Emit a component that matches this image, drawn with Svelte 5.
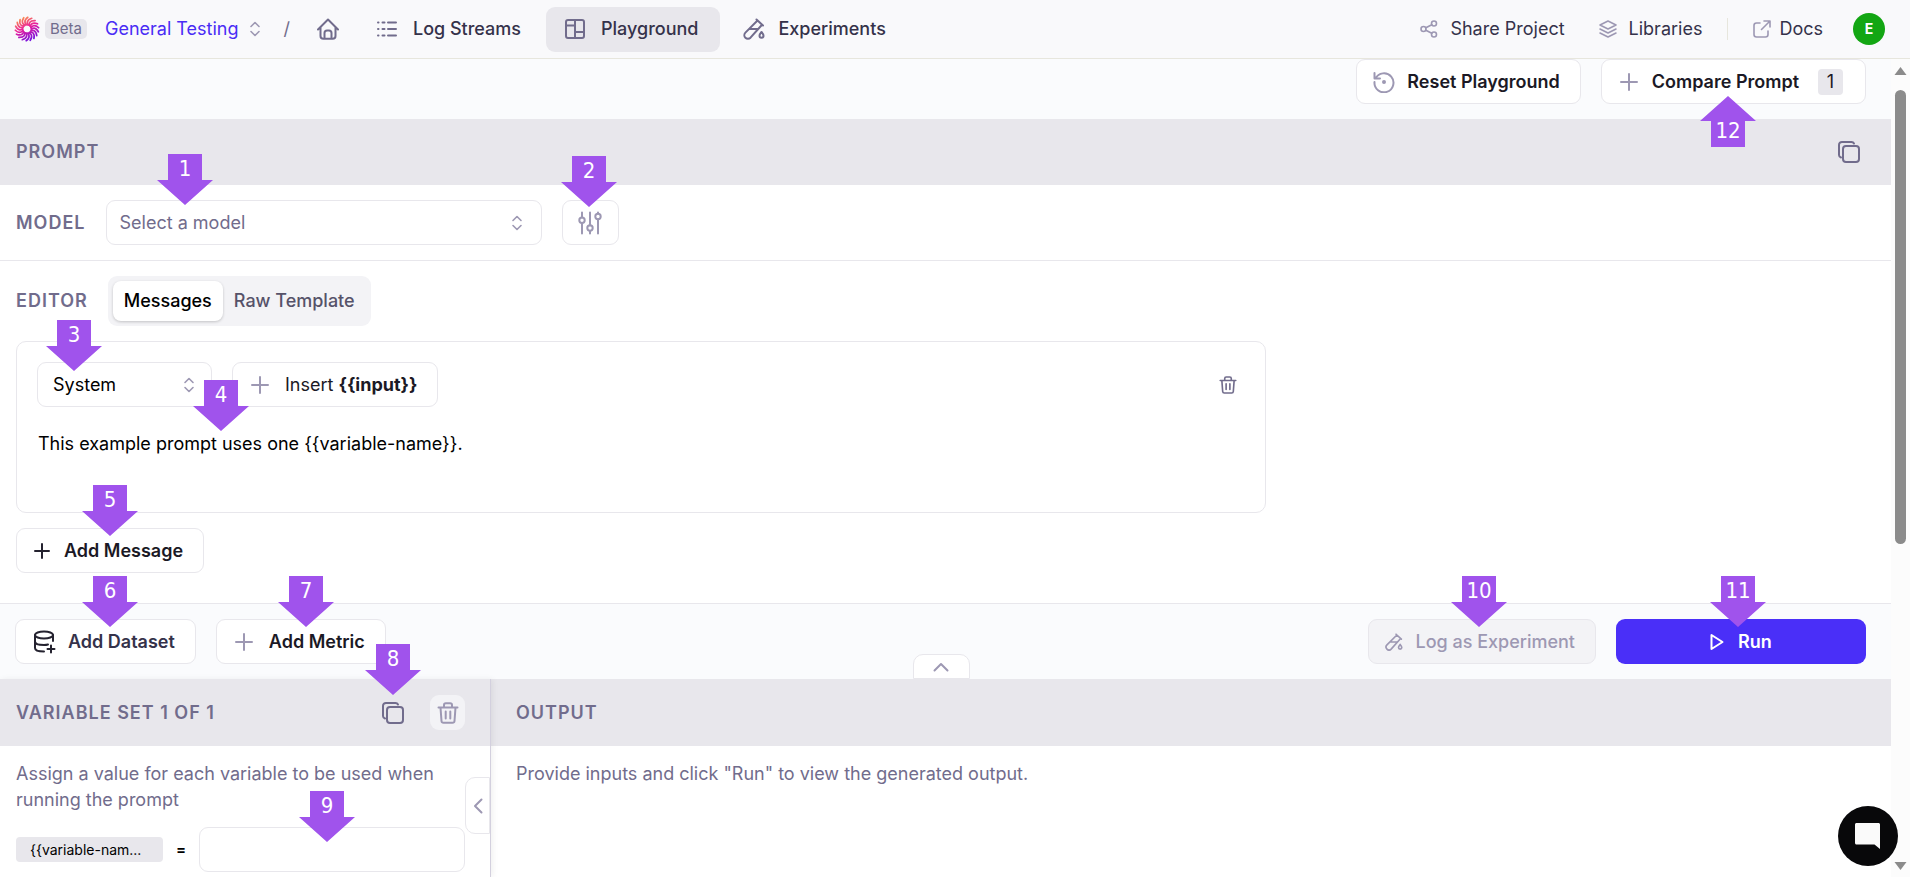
<script>
  let model = $state('');
  let role = $state('System');
  let prompt = $state('This example prompt uses one {{variable-name}}.');
  let value = $state('');

  const inputToken = '{{input}}';
  const variableLabel = '{{variable-nam...';
  const petals = Array.from({ length: 18 }, (_, i) => i * 20);

  const markers = [
    { n: 1, left: 185, top: 154 },
    { n: 2, left: 589, top: 156 },
    { n: 3, left: 74, top: 320 },
    { n: 4, left: 221, top: 380 },
    { n: 5, left: 110, top: 485 },
    { n: 6, left: 110, top: 576 },
    { n: 7, left: 306, top: 576 },
    { n: 8, left: 393, top: 644 },
    { n: 9, left: 327, top: 791 },
    { n: 10, right: 431, top: 576 },
    { n: 11, right: 172, top: 576 },
    { n: 12, right: 182, top: 96, up: true }
  ];

  const place = (m) =>
    (m.left !== undefined ? `left:${m.left - 28}px` : `right:${m.right - 28}px`) + `;top:${m.top}px`;
</script>

{#snippet updown()}
  <svg class="updown" width="12" height="16" viewBox="0 0 12 16" aria-hidden="true">
    <path d="M2 5.500 6 1.500l4 4M2 10.500l4 4 4-4" />
  </svg>
{/snippet}

{#snippet plus()}
  <svg class="icon" width="18" height="18" viewBox="0 0 18 18" aria-hidden="true">
    <path d="M9 1v16M1 9h16" />
  </svg>
{/snippet}

{#snippet tube(size)}
  <svg class="icon" width={size} height={size} viewBox="0 0 22 22" aria-hidden="true">
    <path d="M13.500 1.500l6.500 6M14.500 2.500 2.400 14.600a3.600 3.600 0 0 0 5.100 5.100L18.800 7M6.500 11h8M18.500 14c1.300 1.600 2 2.500 2 3.700a2 2 0 0 1-4 0c0-1.200.7-2.100 2-3.700z" />
  </svg>
{/snippet}

{#snippet copy()}
  <svg class="icon" width="22" height="22" viewBox="0 0 22 22" aria-hidden="true">
    <rect x="5" y="5" width="16" height="16" rx="3" />
    <path d="M3 16.500C1.700 16 1 15.200 1 14V4c0-1.800 1.200-3 3-3h9.500c1.300 0 2 .5 2.500 1.500" />
  </svg>
{/snippet}

{#snippet trash(size)}
  <svg class="icon" width={size} height={size} viewBox="0 0 22 22" aria-hidden="true">
    <path d="M1.500 5.500h19M3.500 5.500l1 13.500c.1 1.200.8 1.800 2 1.800h9c1.200 0 1.900-.6 2-1.800l1-13.500M7 5.500V3c0-1.200.6-1.800 1.800-1.800h4.400C14.400 1.200 15 1.800 15 3v2.500M8.700 9.500v7M13.300 9.500v7" />
  </svg>
{/snippet}

<div class="app">
  <header class="topbar">
    <nav class="nav" aria-label="Project">
      <a class="brand" href="#home" aria-label="Home page">
        <svg width="26" height="26" viewBox="0 0 26 26" aria-hidden="true">
          <defs>
            <linearGradient id="brand-fill" gradientUnits="userSpaceOnUse" x1="7" y1="1" x2="18" y2="25">
              <stop offset="0" stop-color="#fb9a4b" />
              <stop offset=".45" stop-color="#ea1f9c" />
              <stop offset="1" stop-color="#6a10e6" />
            </linearGradient>
            <mask id="brand-mask" maskUnits="userSpaceOnUse" x="0" y="0" width="26" height="26">
              {#each petals as angle}
                <path d="M13.500 8.800C10.500 8.300 9.500 4.500 13.800 1.300" transform={`rotate(${angle} 13 13)`} fill="none" stroke="#fff" stroke-width="1.700" stroke-linecap="round" />
              {/each}
            </mask>
          </defs>
          <rect width="26" height="26" fill="url(#brand-fill)" mask="url(#brand-mask)" />
        </svg>
        <span class="beta">Beta</span>
      </a>
      <button class="project">General Testing {@render updown()}</button>
      <span class="slash">/</span>
      <a class="tab home" href="#project" aria-label="Project home">
        <svg class="icon" width="22" height="22" viewBox="0 0 22 22" aria-hidden="true">
          <path d="M1 11.500 11 1.500l10 10M3.500 9.500V18c0 1.800 1 2.800 2.800 2.800h9.400c1.800 0 2.800-1 2.800-2.800V9.500M7.500 20.500V15c0-1.500 1-2.500 2.500-2.500h2c1.500 0 2.500 1 2.500 2.500v5.500" />
        </svg>
      </a>
      <a class="tab" href="#logs">
        <svg class="icon" width="20" height="20" viewBox="0 0 20 20" aria-hidden="true">
          <path d="M1 3.500h.5M5.500 3.500h2M11 3.500h8M1 10h.5M5.500 10h2M11 10h8M1 16.500h.5M5.500 16.500h2M11 16.500h8" />
        </svg>
        Log Streams
      </a>
      <a class="tab active" href="#playground" aria-current="page">
        <svg class="icon" width="20" height="20" viewBox="0 0 20 20" aria-hidden="true">
          <rect x="1" y="1" width="18" height="18" rx="2" />
          <path d="M10 1v18M1 6.500h9M10 13h9" />
        </svg>
        Playground
      </a>
      <a class="tab experiments" href="#experiments">{@render tube(22)} Experiments</a>
    </nav>
    <div class="links">
      <button class="link">
        <svg class="icon" width="18" height="18" viewBox="0 0 18 18" aria-hidden="true">
          <circle cx="3.500" cy="9" r="2.500" /><circle cx="14" cy="3.500" r="2.500" /><circle cx="14" cy="14.500" r="2.500" />
          <path d="M5.800 7.800l6-3.100M5.800 10.200l6 3.100" />
        </svg>
        Share Project
      </button>
      <a class="link" href="#libraries">
        <svg class="icon" width="18" height="18" viewBox="0 0 18 18" aria-hidden="true">
          <path d="M9 1l8 4-8 4-8-4zM1 9l8 4 8-4M1 13l8 4 8-4" />
        </svg>
        Libraries
      </a>
      <span class="divider"></span>
      <a class="link docs" href="#docs">
        <svg class="icon" width="18" height="18" viewBox="0 0 18 18" aria-hidden="true">
          <path d="M7 3H3.500C2 3 1 4 1 5.500v9C1 16 2 17 3.500 17h9c1.500 0 2.500-1 2.500-2.500V11M11 1h6v6M17 1 8.500 9.500" />
        </svg>
        Docs
      </a>
      <button class="avatar" aria-label="Account">E</button>
    </div>
  </header>

  <div class="body">
    <main class="content">
      <div class="actions">
        <button class="btn strong">
          <svg class="icon" width="22" height="22" viewBox="0 0 22 22" aria-hidden="true">
            <path d="M2.500 7.500A9.500 9.500 0 1 1 1.500 11M1.500 2v5.500H7" />
            <circle cx="11" cy="11" r="1" />
          </svg>
          Reset Playground
        </button>
        <button class="btn strong compare">{@render plus()} Compare Prompt <span class="count">1</span></button>
      </div>

      <div class="band">
        <h2>Prompt</h2>
        <button class="bare" aria-label="Copy prompt">{@render copy()}</button>
      </div>

      <div class="model">
        <label for="model">Model</label>
        <div class="select wide">
          <select id="model" bind:value={model} class:empty={model === ''}>
            <option value="">Select a model</option>
          </select>
          {@render updown()}
        </div>
        <button class="btn square" aria-label="Model settings">
          <svg class="icon" width="24" height="24" viewBox="0 0 24 24" aria-hidden="true">
            <path d="M4 1.500v5M4 12v10.500M12 1.500v13M12 20v2.500M20 1.500v1M20 8.500v14" />
            <circle cx="4" cy="9.300" r="2.700" /><circle cx="12" cy="17" r="2.700" /><circle cx="20" cy="5.500" r="2.700" />
          </svg>
        </button>
      </div>

      <section class="editor">
        <div class="modes">
          <h3>Editor</h3>
          <div class="segmented" role="tablist">
            <button role="tab" aria-selected="true" class="on">Messages</button>
            <button role="tab" aria-selected="false">Raw Template</button>
          </div>
        </div>
        <div class="message">
          <div class="tools">
            <div class="select role">
              <select aria-label="Message role" bind:value={role}>
                <option>System</option>
              </select>
              {@render updown()}
            </div>
            <button class="btn insert">{@render plus()} <span>Insert <b>{inputToken}</b></span></button>
            <button class="bare remove" aria-label="Delete message">{@render trash(18)}</button>
          </div>
          <textarea aria-label="Message text" bind:value={prompt}></textarea>
        </div>
        <button class="btn strong add">
          <svg class="icon" width="16" height="16" viewBox="0 0 16 16" aria-hidden="true"><path d="M8 1v14M1 8h14" /></svg>
          Add Message
        </button>
      </section>

      <div class="runbar">
        <button class="btn dataset">
          <svg class="icon" width="22" height="24" viewBox="0 0 22 24" aria-hidden="true">
            <ellipse cx="10" cy="5" rx="9" ry="3.500" />
            <path d="M1 5v13c0 2 3.500 3.500 9 3.500M1 11.500C1 13.500 4.500 15 10 15c1.500 0 3-.2 4-.5M19 5v6M17 15.500v7M13.500 19h7" />
          </svg>
          Add Dataset
        </button>
        <button class="btn strong metric">{@render plus()} Add Metric</button>
        <button class="btn log" disabled>{@render tube(18)} Log as Experiment</button>
        <button class="btn run">
          <svg class="icon" width="14" height="18" viewBox="0 0 14 18" aria-hidden="true"><path d="M1.500 2v14l11-7z" /></svg>
          Run
        </button>
        <button class="collapse-up" aria-label="Collapse editor">
          <svg class="icon" width="16" height="10" viewBox="0 0 16 10" aria-hidden="true"><path d="M1.500 8.500 8 2l6.500 6.500" /></svg>
        </button>
      </div>

      <div class="panes">
        <section class="variables">
          <div class="band">
            <h2>Variable set 1 of 1</h2>
            <div class="band-tools">
              <button class="bare" aria-label="Copy variable set">{@render copy()}</button>
              <button class="chip-btn" aria-label="Delete variable set">{@render trash(22)}</button>
            </div>
          </div>
          <div class="pane-body">
            <p>Assign a value for each variable to be used when running the prompt</p>
            <div class="assign">
              <label for="value">{variableLabel}</label>
              <span class="equals">=</span>
              <input id="value" type="text" bind:value />
            </div>
          </div>
          <button class="collapse-left" aria-label="Collapse variables">
            <svg class="icon" width="10" height="16" viewBox="0 0 10 16" aria-hidden="true"><path d="M8.500 1.500 2 8l6.500 6.500" /></svg>
          </button>
        </section>
        <section class="output">
          <div class="band"><h2>Output</h2></div>
          <div class="pane-body"><p>Provide inputs and click "Run" to view the generated output.</p></div>
        </section>
      </div>
    </main>

    <div class="track" aria-hidden="true">
      <svg width="13" height="8" viewBox="0 0 12 8"><path d="M6 0l6 8H0z" /></svg>
      <div class="rail"><div class="thumb"></div></div>
      <svg width="13" height="8" viewBox="0 0 12 8"><path d="M0 0h12L6 8z" /></svg>
    </div>
  </div>

  <button class="chat" aria-label="Open chat">
    <svg width="28" height="28" viewBox="0 0 28 28" aria-hidden="true">
      <path d="M2.500 1h22c.8 0 1.500.7 1.500 1.500V27l-5.500-4.500h-18C1.700 22.500 1 21.800 1 21V2.500C1 1.700 1.700 1 2.500 1z" fill="#fafafa" />
    </svg>
  </button>

  {#each markers as m}
    <div class="marker" class:up={m.up} style={place(m)}>
      <span>{m.n}</span>
    </div>
  {/each}
</div>

<style>
  :global(body) {
    margin: 0;
    background: #fff;
  }

  .app {
    --line: #e8e7ec;
    --muted: #716c8c;
    --faint: #9d98b3;
    --ink: #35324a;
    position: relative;
    display: flex;
    flex-direction: column;
    height: 100vh;
    overflow: hidden;
    font-family: Inter, "Liberation Sans", sans-serif;
    font-size: 18px;
    line-height: 26px;
    color: #1b1925;
  }

  .app *,
  .app *::before {
    box-sizing: border-box;
  }

  button,
  select,
  input,
  textarea {
    font: inherit;
    color: inherit;
  }

  button {
    display: flex;
    align-items: center;
    padding: 0;
    border: 0;
    background: none;
    white-space: nowrap;
  }

  a {
    color: inherit;
    text-decoration: none;
  }

  .icon,
  .updown {
    flex: none;
    fill: none;
    stroke: currentColor;
    stroke-width: 2;
    stroke-linecap: round;
    stroke-linejoin: round;
  }

  .updown {
    color: var(--faint);
    stroke-width: 1.6;
  }

  .topbar {
    flex: none;
    display: flex;
    align-items: center;
    justify-content: space-between;
    height: 59px;
    padding: 0 25px 0 14px;
    border-bottom: 1px solid #e7e6dd;
    background: #f9f9fb;
    color: var(--ink);
  }

  .nav,
  .links,
  .brand {
    display: flex;
    align-items: center;
  }

  .brand {
    gap: 5px;
  }

  .beta {
    padding: 0 5px;
    border-radius: 5px;
    background: var(--line);
    color: var(--muted);
    font-size: 15px;
    line-height: 20px;
  }

  .project {
    gap: 11px;
    margin-left: 18px;
    color: #4a2cf5;
  }

  .slash {
    margin: 0 8px 0 22px;
    color: var(--muted);
  }

  .tab {
    display: flex;
    align-items: center;
    gap: 16px;
    height: 45px;
    padding: 0 19px;
    border-radius: 9px;
    font-weight: 500;
  }

  .tab.active {
    margin: 0 4px 0 6px;
    padding-right: 22px;
    background: var(--line);
  }

  .tab.experiments {
    gap: 13px;
  }

  .tab .icon {
    color: var(--muted);
  }

  .link {
    display: flex;
    align-items: center;
    gap: 12px;
    margin-right: 34px;
  }

  .link .icon {
    color: var(--faint);
    stroke-width: 1.6;
  }

  .links .link:nth-child(2) {
    margin-right: 25px;
  }

  .divider {
    width: 1px;
    height: 22px;
    margin-right: 25px;
    background: #e7e6dd;
  }

  .link.docs {
    gap: 8px;
    margin-right: 30px;
  }

  .avatar {
    justify-content: center;
    width: 32px;
    height: 32px;
    border-radius: 50%;
    background: #13a613;
    color: #fff;
    font-size: 14px;
    font-weight: 700;
  }

  .body {
    flex: 1;
    display: flex;
    min-height: 0;
  }

  .content {
    flex: 1;
    display: flex;
    flex-direction: column;
    min-width: 0;
  }

  .btn {
    gap: 14px;
    height: 45px;
    border: 1px solid var(--line);
    border-radius: 9px;
    background: #fff;
  }

  .btn .icon {
    color: var(--faint);
  }

  .strong {
    font-weight: 600;
  }

  .actions {
    flex: none;
    display: flex;
    justify-content: flex-end;
    gap: 20px;
    height: 60px;
    padding-right: 25px;
    background: #fafbfd;
  }

  .actions .btn {
    gap: 12px;
    padding: 0 20px 0 16px;
  }

  .actions .compare {
    gap: 14px;
    padding: 0 22px 0 18px;
  }

  .count {
    width: 25px;
    margin-left: 5px;
    border-radius: 4px;
    background: var(--line);
    font-weight: 400;
    text-align: center;
  }

  .band {
    flex: none;
    display: flex;
    align-items: center;
    justify-content: space-between;
    height: 66px;
    padding: 0 31px 0 16px;
    background: var(--line);
    color: var(--muted);
  }

  h2,
  h3,
  .model label {
    margin: 0;
    color: var(--muted);
    font-size: 18px;
    font-weight: 600;
    letter-spacing: 1px;
    text-transform: uppercase;
  }

  .model {
    flex: none;
    display: flex;
    align-items: center;
    gap: 20px;
    height: 76px;
    padding: 0 16px;
    border-bottom: 1px solid var(--line);
  }

  .select {
    position: relative;
    display: flex;
    align-items: center;
  }

  .select select {
    width: 100%;
    height: 45px;
    padding: 0 40px 0 13px;
    appearance: none;
    border: 1px solid var(--line);
    border-radius: 9px;
    background: #fff;
    color: #000;
  }

  .select select.empty {
    color: var(--muted);
  }

  .select .updown {
    position: absolute;
    right: 19px;
    pointer-events: none;
  }

  .wide {
    width: 436px;
  }

  .square {
    justify-content: center;
    width: 57px;
  }

  .editor {
    flex: none;
    display: flex;
    flex-direction: column;
    align-items: flex-start;
    gap: 15px;
    padding: 15px 0 30px 16px;
    border-bottom: 1px solid var(--line);
  }

  .modes {
    display: flex;
    align-items: center;
    gap: 20px;
  }

  .segmented {
    display: flex;
    padding: 5px;
    border-radius: 9px;
    background: #f3f3f6;
    color: #565269;
  }

  .segmented button {
    height: 40px;
    padding: 0 11px;
    border-radius: 8px;
    font-weight: 500;
  }

  .segmented .on {
    background: #fff;
    box-shadow: 0 1px 3px #0003;
    color: #000;
  }

  .message {
    width: calc(200% / 3);
    padding: 20px;
    border: 1px solid var(--line);
    border-radius: 10px;
  }

  .tools {
    display: flex;
    align-items: center;
    gap: 20px;
  }

  .role {
    width: 175px;
  }

  .role select {
    padding-left: 15px;
  }

  .role .updown {
    right: 17px;
  }

  .insert {
    gap: 16px;
    padding: 0 20px 0 18px;
  }

  .bare {
    color: var(--muted);
  }

  .remove {
    margin-left: auto;
    margin-right: 8px;
  }

  textarea {
    display: block;
    width: 100%;
    height: 71px;
    margin-top: 14px;
    padding: 10px 1px;
    border: 0;
    resize: none;
    outline: none;
    background: none;
    color: #000;
  }

  .add {
    padding: 0 20px 0 17px;
  }

  .add .icon,
  .dataset .icon {
    color: #24222f;
  }

  .runbar {
    position: relative;
    flex: none;
    display: flex;
    align-items: center;
    height: 75px;
    padding: 0 25px 0 15px;
    background: #fafbfd;
  }

  .dataset {
    gap: 12px;
    margin-right: 20px;
    padding: 0 20px 0 18px;
    color: var(--ink);
    font-weight: 600;
  }

  .metric {
    gap: 16px;
    padding: 0 20px 0 18px;
  }

  .log {
    gap: 12px;
    margin-left: auto;
    margin-right: 20px;
    padding: 0 20px 0 16px;
    background: #f3f3f6;
    color: var(--faint);
    font-weight: 500;
  }

  .run {
    justify-content: center;
    width: 250px;
    border: 0;
    background: #4a2ff8;
    color: #fff;
    font-weight: 600;
  }

  .run .icon {
    color: #fff;
  }

  .collapse-up {
    position: absolute;
    left: 50%;
    bottom: 0;
    justify-content: center;
    width: 57px;
    height: 25px;
    margin-left: -33px;
    border: 1px solid var(--line);
    border-radius: 10px 10px 0 0;
    background: #fff;
    color: var(--faint);
  }

  .panes {
    flex: 1;
    display: flex;
    min-height: 0;
  }

  .panes .band {
    height: 67px;
  }

  .variables {
    position: relative;
    z-index: 1;
    flex: none;
    width: 491px;
    border-right: 1px solid #d3d0de;
    box-shadow: 2px 0 6px #0000000f;
  }

  .variables .band {
    padding-right: 25px;
  }

  .output {
    flex: 1;
    min-width: 0;
  }

  .output .band,
  .output .pane-body {
    padding-left: 25px;
  }

  .band-tools {
    display: flex;
    align-items: center;
    gap: 26px;
  }

  .chip-btn {
    justify-content: center;
    width: 35px;
    height: 35px;
    border-radius: 9px;
    background: #f3f3f6;
    color: var(--faint);
  }

  .pane-body {
    padding: 15px 25px 0 16px;
    color: var(--muted);
  }

  p {
    margin: 0;
  }

  .assign {
    display: flex;
    align-items: center;
    margin-top: 14px;
    color: #000;
  }

  .assign label {
    flex: none;
    width: 147px;
    padding-left: 14px;
    border-radius: 4px;
    background: var(--line);
    font-size: 14px;
    line-height: 25px;
  }

  .equals {
    width: 36px;
    flex: none;
    text-align: center;
    font-size: 15px;
    font-weight: 600;
  }

  .assign input {
    flex: 1;
    min-width: 0;
    height: 45px;
    padding: 0 12px;
    border: 1px solid var(--line);
    border-radius: 9px;
    background: #fff;
  }

  .collapse-left {
    position: absolute;
    top: 98px;
    right: 0;
    justify-content: center;
    width: 25px;
    height: 57px;
    border: 1px solid var(--line);
    border-radius: 10px 0 0 10px;
    background: #fff;
    color: var(--faint);
  }

  .track {
    flex: none;
    display: flex;
    flex-direction: column;
    align-items: center;
    gap: 15px;
    width: 19px;
    padding: 8px 0 7px;
    background: #fcfcfc;
    fill: #8b8b8b;
  }

  .track svg {
    flex: none;
  }

  .rail {
    flex: 1;
    width: 11px;
  }

  .thumb {
    height: 60%;
    border-radius: 6px;
    background: #8b8b8b;
  }

  .chat {
    position: absolute;
    right: 12px;
    bottom: 11px;
    z-index: 2;
    justify-content: center;
    width: 60px;
    height: 60px;
    border-radius: 50%;
    background: #08080a;
  }

  .marker {
    position: absolute;
    z-index: 3;
    width: 56px;
    height: 51px;
    background: #a053ec;
    clip-path: polygon(11px 0, 45px 0, 45px 26px, 100% 26px, 28px 100%, 0 26px, 11px 26px);
    color: #fff;
    font-family: "DejaVu Sans Condensed", "DejaVu Sans", sans-serif;
    font-size: 22px;
    line-height: 30px;
    text-align: center;
    pointer-events: none;
  }

  .marker.up {
    padding-top: 20px;
    clip-path: polygon(28px 0, 100% 25px, 45px 25px, 45px 100%, 11px 100%, 11px 25px, 0 25px);
  }
</style>
